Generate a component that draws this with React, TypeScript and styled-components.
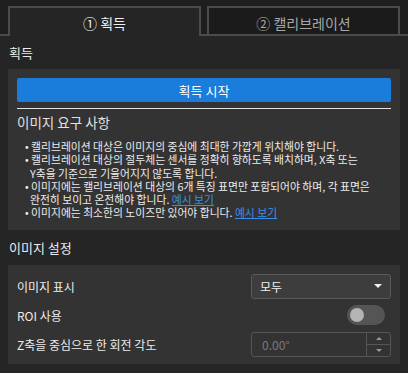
import { useState } from "react";
import styled, { createGlobalStyle } from "styled-components";

const GlobalStyle = createGlobalStyle`
  html, body {
    margin: 0;
    padding: 0;
    background: #252525;
  }
  body {
    font-family: "Noto Sans CJK KR", "Noto Sans", sans-serif;
    color: #e6e6e6;
  }
`;

const Page = styled.div`
  width: 408px;
  height: 373px;
  background: #252525;
  overflow: hidden;
`;

const TabBar = styled.div`
  display: flex;
  align-items: flex-end;
  gap: 6px;
  height: 36px;
  box-sizing: border-box;
  padding: 6px 0 0 8px;
  background: #1e1e1e;
  border-bottom: 2px solid #4b4b4b;
`;

const Tab = styled.div<{ $active?: boolean }>`
  width: 193px;
  box-sizing: border-box;
  height: ${(p) => (p.$active ? "30px" : "28px")};
  margin-bottom: ${(p) => (p.$active ? "-2px" : "0")};
  border: 2px solid #4b4b4b;
  border-bottom: none;
  background: ${(p) => (p.$active ? "#252525" : "#1b1b1b")};
  color: ${(p) => (p.$active ? "#f2f2f2" : "#a8a8a8")};
  font-size: 14px;
  display: flex;
  justify-content: center;
  padding-top: 5px;
  line-height: 20px;
  cursor: pointer;
`;

const Content = styled.div`
  padding: 0 8px;
`;

const SectionTitle = styled.div<{ $h: number }>`
  height: ${(p) => p.$h}px;
  display: flex;
  align-items: center;
  padding-left: 1px;
  font-size: 13px;
  color: #ececec;
`;

const Panel = styled.div`
  background: #333333;
  padding: 9px 9px 10px;
`;

const StartButton = styled.button`
  display: block;
  width: 100%;
  height: 24px;
  border: none;
  border-radius: 2px;
  background: #1a7ddc;
  color: #ffffff;
  font-family: inherit;
  font-size: 13px;
  cursor: pointer;
`;

const Divider = styled.div`
  height: 1px;
  background: #e4e4e4;
  margin-top: 6px;
`;

const Heading = styled.div`
  font-size: 13.5px;
  line-height: 20px;
  margin-top: 3px;
  color: #e2e2e2;
`;

const Bullets = styled.ul`
  list-style: none;
  margin: 8px 0 0;
  padding: 0 12px 0 13px;
`;

const Bullet = styled.li`
  font-size: 10.8px;
  line-height: 13.3px;
  text-indent: -5px;
  word-break: keep-all;
  color: #ececec;
  &::before {
    content: "• ";
  }
`;

const Link = styled.a`
  color: #3a8fe8;
  text-decoration: underline;
  cursor: pointer;
`;

const SettingsPanel = styled.div`
  background: #333333;
  padding: 9px 9px 7px;
  display: flex;
  flex-direction: column;
  gap: 4px;
`;

const Row = styled.div`
  height: 25px;
  display: flex;
  align-items: center;
  justify-content: space-between;
`;

const Label = styled.span`
  font-size: 12px;
  color: #ececec;
`;

const Select = styled.div`
  width: 140px;
  height: 25px;
  box-sizing: border-box;
  border: 1px solid #5a5a5a;
  border-radius: 3px;
  background: #3d3d3d;
  display: flex;
  align-items: center;
  justify-content: space-between;
  padding: 0 8px 0 8px;
  font-size: 12px;
  color: #f0f0f0;
`;

const Toggle = styled.button<{ $on: boolean }>`
  position: relative;
  width: 38px;
  height: 20px;
  margin-right: 6px;
  border: none;
  border-radius: 10px;
  background: ${(p) => (p.$on ? "#1a7ddc" : "#555555")};
  padding: 0;
  cursor: pointer;
  &::after {
    content: "";
    position: absolute;
    top: 3px;
    left: ${(p) => (p.$on ? "21px" : "3px")};
    width: 14px;
    height: 14px;
    border-radius: 50%;
    background: #b4b4b4;
  }
`;

const SpinBox = styled.div`
  width: 140px;
  height: 25px;
  box-sizing: border-box;
  border: 1px solid #555555;
  border-radius: 3px;
  display: flex;
`;

const SpinValue = styled.div`
  flex: 1;
  display: flex;
  align-items: center;
  padding-left: 10px;
  font-size: 12px;
  color: #7a7a7a;
`;

const SpinButtons = styled.div`
  width: 23px;
  border-left: 1px solid #555555;
  display: flex;
  flex-direction: column;
`;

const SpinButton = styled.div<{ $top?: boolean }>`
  flex: 1;
  display: flex;
  align-items: center;
  justify-content: center;
  border-bottom: ${(p) => (p.$top ? "1px solid #555555" : "none")};
`;

const Caret = ({ up, size = 8, color = "#f0f0f0" }: { up?: boolean; size?: number; color?: string }) => (
  <svg width={size} height={size / 2} viewBox="0 0 8 4">
    <path d={up ? "M0 4 L4 0 L8 4 Z" : "M0 0 L8 0 L4 4 Z"} fill={color} />
  </svg>
);

export default function App() {
  const [tab, setTab] = useState(0);
  const [roi, setRoi] = useState(false);

  return (
    <Page>
      <GlobalStyle />
      <TabBar>
        <Tab $active={tab === 0} onClick={() => setTab(0)}>
          ① 획득
        </Tab>
        <Tab $active={tab === 1} onClick={() => setTab(1)}>
          ② 캘리브레이션
        </Tab>
      </TabBar>

      <Content>
        <SectionTitle $h={33}>획득</SectionTitle>
        <Panel>
          <StartButton>획득 시작</StartButton>
          <Divider />
          <Heading>이미지 요구 사항</Heading>
          <Bullets>
            <Bullet>캘리브레이션 대상은 이미지의 중심에 최대한 가깝게 위치해야 합니다.</Bullet>
            <Bullet>
              캘리브레이션 대상의 절두체는 센서를 정확히 향하도록 배치하며, X축 또는 Y축을 기준으로 기울어지지
              않도록 합니다.
            </Bullet>
            <Bullet>
              이미지에는 캘리브레이션 대상의 6개 특징 표면만 포함되어야 하며, 각 표면은 완전히 보이고 온전해야
              합니다. <Link>예시 보기</Link>
            </Bullet>
            <Bullet>
              이미지에는 최소한의 노이즈만 있어야 합니다. <Link>예시 보기</Link>
            </Bullet>
          </Bullets>
        </Panel>

        <SectionTitle $h={35}>이미지 설정</SectionTitle>
        <SettingsPanel>
          <Row>
            <Label>이미지 표시</Label>
            <Select>
              모두
              <Caret />
            </Select>
          </Row>
          <Row>
            <Label>ROI 사용</Label>
            <Toggle $on={roi} onClick={() => setRoi(!roi)} />
          </Row>
          <Row>
            <Label>Z축을 중심으로 한 회전 각도</Label>
            <SpinBox>
              <SpinValue>0.00°</SpinValue>
              <SpinButtons>
                <SpinButton $top>
                  <Caret up size={6} color="#9a9a9a" />
                </SpinButton>
                <SpinButton>
                  <Caret size={6} color="#9a9a9a" />
                </SpinButton>
              </SpinButtons>
            </SpinBox>
          </Row>
        </SettingsPanel>
      </Content>
    </Page>
  );
}
